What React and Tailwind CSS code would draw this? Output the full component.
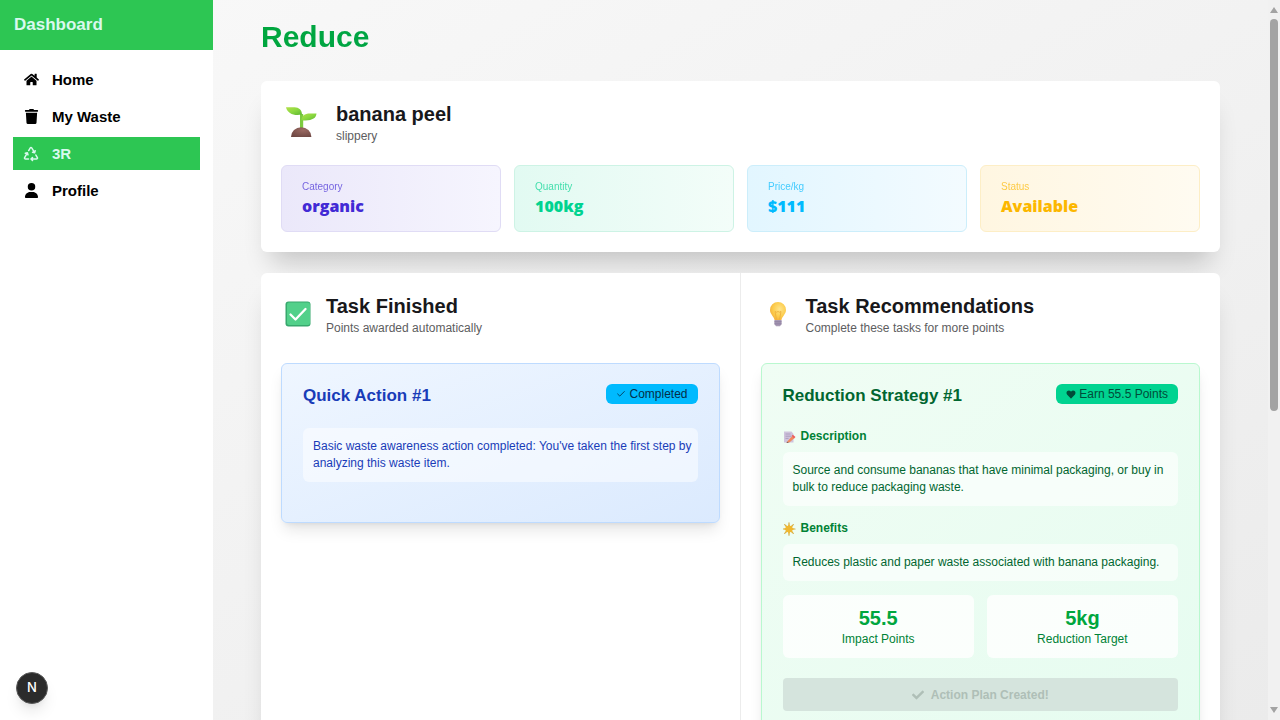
import { FaHome, FaTrash, FaCheck, FaHeart } from "react-icons/fa";
import { FaUser } from "react-icons/fa6";
import { LuCheck } from "react-icons/lu";
import { PiRecycleBold } from "react-icons/pi";

const menu = [
	{ label: "Home", icon: FaHome },
	{ label: "My Waste", icon: FaTrash },
	{ label: "3R", icon: PiRecycleBold, active: true },
	{ label: "Profile", icon: FaUser },
];

const stats = [
	{
		label: "Category",
		value: "organic",
		box: "from-[#ebe8fa] to-[#f6f5fe] border-[#e0dcf5] text-[#422ad5]",
	},
	{
		label: "Quantity",
		value: "100kg",
		box: "from-[#e2faf2] to-[#f3fdf9] border-[#cdf3e5] text-[#00d390]",
	},
	{
		label: "Price/kg",
		value: "$111",
		box: "from-[#e2f6ff] to-[#f3fbff] border-[#cceefb] text-[#00bafe]",
	},
	{
		label: "Status",
		value: "Available",
		box: "from-[#fff6e1] to-[#fffbf1] border-[#fdeec6] text-[#fcb700]",
	},
];

function Seedling() {
	return (
		<svg viewBox="0 0 32 32" className="h-8 w-8" aria-hidden="true">
			<defs>
				<linearGradient id="leaf" x1="0" y1="0" x2="1" y2="1">
					<stop offset="0" stopColor="#b4e04b" />
					<stop offset="0.5" stopColor="#8bd83f" />
					<stop offset="1" stopColor="#5db534" />
				</linearGradient>
				<radialGradient id="soil" cx="0.6" cy="0.3" r="0.8">
					<stop offset="0" stopColor="#9b6a63" />
					<stop offset="1" stopColor="#6d4642" />
				</radialGradient>
			</defs>
			<path d="M14 7h3.200v15h-3.200z" fill="#7ccb3f" />
			<path d="M5 30a10.200 9.800 0 0 1 20.400 0z" fill="url(#soil)" />
			<path d="M0 0.200h8.500c4.500 0 7.500 3 7.500 7.300-4.500.8-9 .6-12-1.600C1.800 4.400.5 2.500 0 .2z" fill="url(#leaf)" />
			<path d="M30.500 6.400h-6.500c-5.500 0-8.500 2.600-8.500 6.800 5 .6 9.400.2 12-1.600 1.800-1.300 2.800-3 3-5.200z" fill="url(#leaf)" />
		</svg>
	);
}

function CheckBoxIcon() {
	return (
		<svg viewBox="0 0 26 26" className="mb-[2px] h-[26px] w-[26px]" aria-hidden="true">
			<rect x="0.500" y="0.500" width="25" height="25" rx="3" fill="#37a86d" />
			<rect x="2" y="1.500" width="23" height="22.500" rx="2" fill="#52d08a" />
			<path d="M5.500 13.500 10.500 18.500 20.500 8" fill="none" stroke="#fff" strokeWidth="2.300" strokeLinecap="round" strokeLinejoin="round" />
		</svg>
	);
}

function Bulb() {
	return (
		<svg viewBox="0 0 18 26" className="mb-[2px] h-[26px] w-[18px]" aria-hidden="true">
			<defs>
				<radialGradient id="glass" cx="0.6" cy="0.4" r="0.7">
					<stop offset="0" stopColor="#ffe58a" />
					<stop offset="0.6" stopColor="#fccb4b" />
					<stop offset="1" stopColor="#f2a93b" />
				</radialGradient>
			</defs>
			<path d="M9 1a8 8 0 0 1 8 8c0 4-3.600 6-4.600 10H5.600C4.600 15 1 13 1 9a8 8 0 0 1 8-8z" fill="url(#glass)" />
			<path d="M7.500 18.500 6 10.500q1.500 1.400 3 0 1.500 1.400 3 0l-1.500 8" fill="none" stroke="#eeb03c" strokeWidth="0.900" />
			<path d="M5.400 19h7.200v4l-1.600 2.300H7L5.400 23z" fill="#a99bb5" />
			<path d="M5.400 20.800h7.200M5.400 22.900h7.200" stroke="#85779a" strokeWidth="0.800" />
		</svg>
	);
}

function Memo() {
	return (
		<svg viewBox="0 0 14 14" className="h-[14px] w-[14px]" aria-hidden="true">
			<path d="M1 1.500h7.500L10.500 4v8.500H1z" fill="#cfc3dc" />
			<path d="M2.500 4h5M2.500 6.200h6M2.500 8.400h3" stroke="#a394b8" strokeWidth="0.800" />
			<path d="M4 11.800 9.300 6l2.200 2-5.200 4.600z" fill="#f08a5c" />
			<path d="M8.800 5.800 9.800 4.800l2.700 2.200L11 8.500z" fill="#ee5a5a" />
			<path d="m4 11.800-.5 1.300 2.800-.5z" fill="#7b4a3a" />
		</svg>
	);
}

function Sun() {
	return (
		<svg viewBox="0 0 14 14" className="h-[14px] w-[14px]" aria-hidden="true">
			<path d="M6 .8v12.400M0 7h12M1.700 2.700l8.600 8.600M10.300 2.700l-8.600 8.600" stroke="#d3ab45" strokeWidth="1.200" strokeLinecap="round" />
			<path d="m6 2.200 1.300 1.900 2.300-.6-.3 2.300 2 1.200-2 1.300.3 2.300-2.300-.6L6 11.900l-1.300-1.900-2.300.6.300-2.300-2-1.300 2-1.200-.3-2.300 2.300.6z" fill="#efb730" />
		</svg>
	);
}

function SectionTitle({ icon, title, text }) {
	return (
		<div className="flex items-center gap-[11px]">
			<div className="flex w-[34px] justify-center">{icon}</div>
			<div>
				<h2 className="text-[20px] leading-[27px] font-bold text-[#18181b]">{title}</h2>
				<p className="text-[12px] leading-[17px] text-[#5d5d60]">{text}</p>
			</div>
		</div>
	);
}

function Sidebar() {
	return (
		<aside className="flex w-[213px] shrink-0 flex-col bg-white">
			<div className="flex h-[50px] items-center bg-[#2dc653] px-[14px]">
				<span className="text-[17px] leading-[24px] font-bold text-[#d8f9ee]">Dashboard</span>
			</div>
			<nav className="flex flex-col gap-1 px-[13px] pt-[13px]">
				{menu.map(({ label, icon: Icon, active }) => (
					<a
						key={label}
						href="#"
						className={`flex h-[33px] items-center gap-[13px] px-[10px] text-[15px] leading-[21px] font-bold ${
							active ? "bg-[#2dc653] text-[#d8f9ee]" : "text-black"
						}`}
					>
						<span className="flex w-4 justify-center">
							<Icon className={active ? "h-4 w-4" : "h-[15px] w-[15px]"} />
						</span>
						<span>{label}</span>
					</a>
				))}
			</nav>
			{/* Dev tools badge */}
			<div className="mt-auto p-4">
				<button
					aria-label="Open dev tools"
					className="flex h-8 w-8 items-center justify-center rounded-full border border-[#5a5a5a] bg-[#2b2b2b] font-['Inter'] text-[13px] font-medium text-white shadow-lg"
				>
					N
				</button>
			</div>
		</aside>
	);
}

function ItemCard() {
	return (
		<section className="rounded-md bg-white p-5 shadow-[0_20px_25px_-10px_rgba(0,0,0,0.2)]">
			<div className="flex items-center gap-[13px]">
				<div className="flex w-[42px] justify-center">
					<Seedling />
				</div>
				<div>
					<h2 className="text-[20px] leading-[27px] font-bold text-[#18181b]">banana peel</h2>
					<p className="text-[12px] leading-[17px] text-[#5d5d60]">slippery</p>
				</div>
			</div>
			<div className="mt-5 grid grid-cols-4 gap-[13px]">
				{stats.map((s) => (
					<div key={s.label} className={`rounded-md border bg-gradient-to-r px-5 py-[13px] ${s.box}`}>
						<p className="mb-px text-[10px] leading-[15px] opacity-70">{s.label}</p>
						<p className="font-['Open_Sans'] text-[16px] leading-[23px] font-extrabold">{s.value}</p>
					</div>
				))}
			</div>
		</section>
	);
}

function FinishedTask() {
	return (
		<article className="mt-[26px] rounded-md border border-[#bedbff] bg-gradient-to-br from-[#eff6ff] to-[#dbeafe] px-[21px] py-5 shadow-lg">
			<div className="mb-[21px] flex items-start justify-between">
				<h3 className="text-[17px] leading-[23px] font-bold text-[#193cb8]">Quick Action #1</h3>
				<span className="flex h-5 items-center gap-[3px] rounded-md bg-[#00bafe] px-[10px] text-[12px] text-[#042e49]">
					<LuCheck className="h-[10px] w-[10px]" />
					Completed
				</span>
			</div>
			<p className="mb-5 rounded-md bg-white/50 py-[10px] pr-1 pl-[10px] text-[12px] leading-[17px] text-[#193cb8]">
				Basic waste awareness action completed: You've taken the first step by analyzing this waste item.
			</p>
		</article>
	);
}

function TextBlock({ icon, title, children }) {
	return (
		<div className="mb-[14px]">
			<h4 className="mb-[7px] flex items-center gap-[4px] text-[12px] leading-[17px] font-bold text-[#008236]">
				{icon}
				{title}
			</h4>
			<p className="rounded-md bg-white/60 py-[10px] pr-1 pl-[10px] text-[12px] leading-[17px] text-[#016630]">
				{children}
			</p>
		</div>
	);
}

function RecommendedTask() {
	return (
		<article className="mt-[26px] rounded-md border border-[#b9f8cf] bg-gradient-to-br from-[#f0fdf4] to-[#e6fcf0] px-[21px] py-5 shadow-lg">
			<div className="mb-[21px] flex items-start justify-between">
				<h3 className="text-[17px] leading-[23px] font-bold text-[#016630]">Reduction Strategy #1</h3>
				<span className="flex h-5 items-center gap-[3px] rounded-md bg-[#00d390] px-[10px] text-[12px] text-[#004c39]">
					<FaHeart className="h-[9px] w-[10px]" />
					Earn 55.5 Points
				</span>
			</div>
			<TextBlock icon={<Memo />} title="Description">
				Source and consume bananas that have minimal packaging, or buy in bulk to reduce packaging waste.
			</TextBlock>
			<TextBlock icon={<Sun />} title="Benefits">
				Reduces plastic and paper waste associated with banana packaging.
			</TextBlock>
			<div className="grid grid-cols-2 gap-[13px] text-center">
				<div className="rounded-md bg-white/80 p-[10px]">
					<p className="text-[20px] leading-[26px] font-bold text-[#00a63e]">55.5</p>
					<p className="text-[12px] leading-[17px] text-[#008236]">Impact Points</p>
				</div>
				<div className="rounded-md bg-white/80 p-[10px]">
					<p className="text-[20px] leading-[26px] font-bold text-[#00a63e]">5kg</p>
					<p className="text-[12px] leading-[17px] text-[#008236]">Reduction Target</p>
				</div>
			</div>
			<button
				disabled
				className="mt-5 flex h-[33px] w-full items-center justify-center gap-[7px] rounded-[4px] bg-[#d5e4dd] text-[12px] font-bold text-[#afbfb7]"
			>
				<FaCheck className="h-3 w-3" />
				Action Plan Created!
			</button>
		</article>
	);
}

function ScrollRail() {
	return (
		<div className="flex w-3 shrink-0 flex-col items-center bg-[#f1f1f1] py-[7px]" aria-hidden="true">
			<svg viewBox="0 0 8 6" className="h-[6px] w-2" fill="#a3a3a3">
				<path d="M4 0 8 6H0z" />
			</svg>
			<div className="mt-[6px] w-2 basis-[392px] rounded-full bg-[#a3a3a3]" />
			<svg viewBox="0 0 8 6" className="mt-auto h-[6px] w-2" fill="#a3a3a3">
				<path d="M4 6 8 0H0z" />
			</svg>
		</div>
	);
}

export default function App() {
	return (
		<div className="flex h-screen overflow-hidden bg-gradient-to-br from-[#f9f9f9] to-[#ebebeb] font-['Liberation_Sans',Arial,sans-serif]">
			<Sidebar />
			<main className="min-w-0 flex-1 overflow-hidden px-12 pt-[17px] pb-12">
				<h1 className="mb-6 bg-gradient-to-r from-[#00a63e] to-[#009966] bg-clip-text text-[30px] leading-10 font-bold text-transparent">
					Reduce
				</h1>
				<ItemCard />
				<section className="mt-[21px] grid grid-cols-2 rounded-md bg-white shadow-[0_20px_25px_-10px_rgba(0,0,0,0.2)]">
					<div className="border-r border-[#ececec] p-5">
						<SectionTitle icon={<CheckBoxIcon />} title="Task Finished" text="Points awarded automatically" />
						<FinishedTask />
					</div>
					<div className="p-5">
						<SectionTitle icon={<Bulb />} title="Task Recommendations" text="Complete these tasks for more points" />
						<RecommendedTask />
					</div>
				</section>
			</main>
			<ScrollRail />
		</div>
	);
}
